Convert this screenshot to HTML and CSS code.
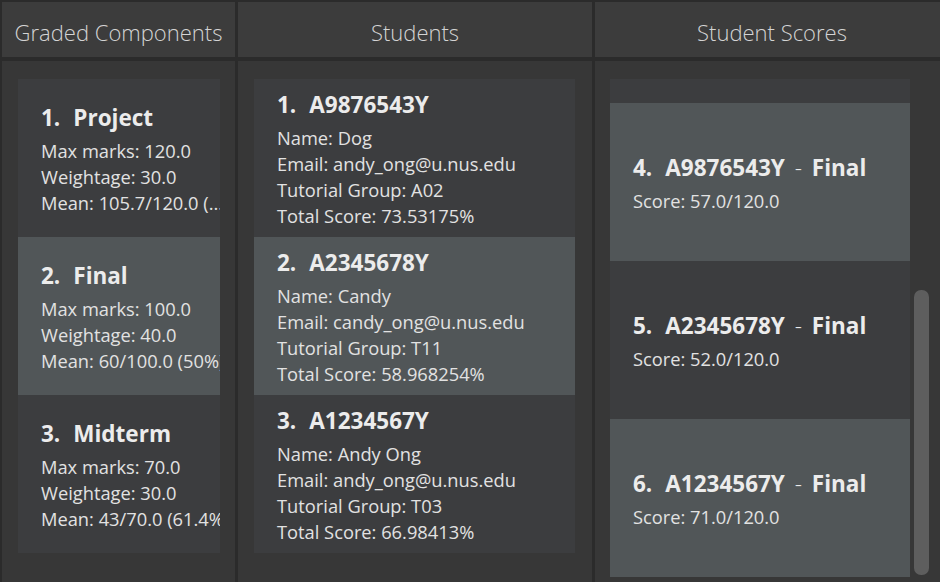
FILE: index.html
```html
<!DOCTYPE html>
<html>
<head>
<meta charset="utf-8">
<link rel="stylesheet" href="styles.css">
</head>
<body>
<div class="app">
  <div class="header">Graded Components</div>
  <div class="header">Students</div>
  <div class="header header-sc">Student Scores</div>

  <div class="panel panel-gc">
    <div class="list">
      <div class="card">
        <div class="title"><span>1.</span><span>Project</span></div>
        <div class="line">Max marks: 120.0</div>
        <div class="line">Weightage: 30.0</div>
        <div class="line">Mean: 105.7/120.0 (...</div>
      </div>
      <div class="card selected">
        <div class="title"><span>2.</span><span>Final</span></div>
        <div class="line">Max marks: 100.0</div>
        <div class="line">Weightage: 40.0</div>
        <div class="line">Mean: 60/100.0 (50%)</div>
      </div>
      <div class="card">
        <div class="title"><span>3.</span><span>Midterm</span></div>
        <div class="line">Max marks: 70.0</div>
        <div class="line">Weightage: 30.0</div>
        <div class="line">Mean: 43/70.0 (61.4%)</div>
      </div>
    </div>
  </div>

  <div class="panel panel-st">
    <div class="list">
      <div class="card">
        <div class="title"><span>1.</span><span>A9876543Y</span></div>
        <div class="line">Name: Dog</div>
        <div class="line">Email: andy_ong@u.nus.edu</div>
        <div class="line">Tutorial Group: A02</div>
        <div class="line">Total Score: 73.53175%</div>
      </div>
      <div class="card selected">
        <div class="title"><span>2.</span><span>A2345678Y</span></div>
        <div class="line">Name: Candy</div>
        <div class="line">Email: candy_ong@u.nus.edu</div>
        <div class="line">Tutorial Group: T11</div>
        <div class="line">Total Score: 58.968254%</div>
      </div>
      <div class="card">
        <div class="title"><span>3.</span><span>A1234567Y</span></div>
        <div class="line">Name: Andy Ong</div>
        <div class="line">Email: andy_ong@u.nus.edu</div>
        <div class="line">Tutorial Group: T03</div>
        <div class="line">Total Score: 66.98413%</div>
      </div>
    </div>
  </div>

  <div class="panel panel-sc">
    <div class="scroll-view">
      <div class="list list-end">
        <div class="card">
          <div class="title"><span>3.</span><span>A1234567Y <span class="dash">-</span> Midterm</span></div>
          <div class="line">Score: 43.0/70.0</div>
        </div>
        <div class="card selected">
          <div class="title"><span>4.</span><span>A9876543Y <span class="dash">-</span> Final</span></div>
          <div class="line">Score: 57.0/120.0</div>
        </div>
        <div class="card">
          <div class="title"><span>5.</span><span>A2345678Y <span class="dash">-</span> Final</span></div>
          <div class="line">Score: 52.0/120.0</div>
        </div>
        <div class="card selected">
          <div class="title"><span>6.</span><span>A1234567Y <span class="dash">-</span> Final</span></div>
          <div class="line">Score: 71.0/120.0</div>
        </div>
      </div>
      <div class="scrollbar"><div class="thumb"></div></div>
    </div>
  </div>
</div>
</body>
</html>
```
FILE: styles.css
```css
* { box-sizing: border-box; }
html, body {
  margin: 0;
  height: 100%;
  background: #2b2b2b;
}
body {
  font-family: "Open Sans", "Noto Sans", sans-serif;
  color: #e6e6e6;
  overflow: hidden;
}
.app {
  display: grid;
  grid-template-columns: 233px 354px 1fr;
  grid-template-rows: 55px 1fr;
  column-gap: 3px;
  row-gap: 4px;
  padding: 2px 0 0 2px;
  height: 582px;
}
.header {
  background: #3c3c3c;
  display: flex;
  align-items: center;
  justify-content: center;
  font-size: 22px;
  line-height: 30px;
  font-weight: 300;
  color: #d4d4d4;
  padding-top: 4px;
  white-space: nowrap;
}
.header-sc { padding-left: 9px; }
.panel {
  background: #373737;
  padding-top: 18px;
  overflow: hidden;
  min-height: 0;
}
.panel-gc { padding-left: 16px; padding-right: 15px; }
.panel-st { padding-left: 16px; padding-right: 17px; }
.panel-sc { padding-left: 15px; padding-right: 12px; padding-bottom: 5px; display: flex; }
.list {
  display: flex;
  flex-direction: column;
}
.card {
  height: 158px;
  flex: 0 0 158px;
  background: #3c3d3f;
  padding-left: 23px;
  padding-bottom: 2px;
  display: flex;
  flex-direction: column;
  justify-content: center;
  overflow: hidden;
  white-space: nowrap;
}
.card.selected { background: #515658; }
.title {
  display: flex;
  gap: 13px;
  font-size: 22.5px;
  font-weight: 700;
  line-height: 40px;
  color: #ececec;
}
.title .dash { font-weight: 300; margin: 0 4px; }
.line {
  font-size: 18.3px;
  line-height: 26px;
  color: #e2e2e2;
}
.scroll-view {
  flex: 1;
  display: flex;
  gap: 4px;
  min-height: 0;
}
.list-end {
  flex: 1;
  justify-content: flex-end;
  overflow: hidden;
}
.scrollbar {
  width: 15px;
  display: flex;
  flex-direction: column;
  justify-content: flex-end;
  padding-bottom: 2px;
}
.thumb {
  height: 285px;
  background: #5e5e5e;
  border-radius: 7px;
}
```
